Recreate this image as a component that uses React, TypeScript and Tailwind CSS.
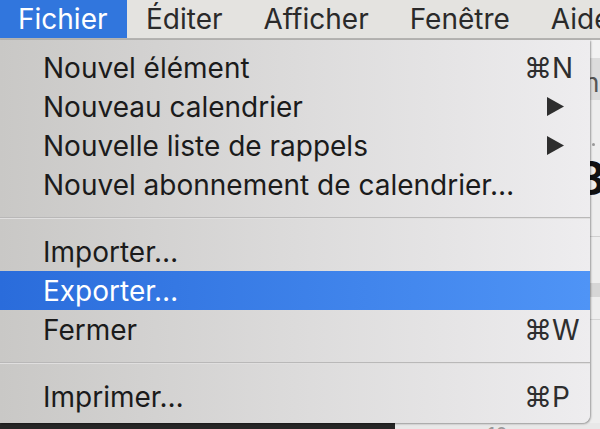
import React from 'react';

type Item =
  | { kind: 'item'; label: string; shortcut?: string; submenu?: boolean; active?: boolean }
  | { kind: 'sep' };

const items: Item[] = [
  { kind: 'item', label: 'Nouvel élément', shortcut: '⌘N' },
  { kind: 'item', label: 'Nouveau calendrier', submenu: true },
  { kind: 'item', label: 'Nouvelle liste de rappels', submenu: true },
  { kind: 'item', label: 'Nouvel abonnement de calendrier…' },
  { kind: 'sep' },
  { kind: 'item', label: 'Importer…' },
  { kind: 'item', label: 'Exporter…', active: true },
  { kind: 'item', label: 'Fermer', shortcut: '⌘W' },
  { kind: 'sep' },
  { kind: 'item', label: 'Imprimer…', shortcut: '⌘P' },
];

const menus = ['Éditer', 'Afficher', 'Fenêtre', 'Aide'];

const App: React.FC = () => {
  return (
    <div
      className="w-[600px] h-[429px] overflow-hidden flex flex-col bg-[#e9e9e9] text-[#1b1b1b]"
      style={{ fontFamily: 'Inter, "Liberation Sans", sans-serif' }}
    >
      {/* menu bar */}
      <div className="h-[38px] shrink-0 flex items-stretch bg-[#e4e3e0] text-[28px] text-[#2a2a2a] overflow-hidden">
        <div className="w-[127px] shrink-0 flex items-center pl-[18px] bg-[#3176dd] text-white">Fichier</div>
        <div className="flex items-center gap-[41px] pl-[19px]">
          {menus.map((m) => (
            <span key={m} className="whitespace-nowrap">{m}</span>
          ))}
        </div>
      </div>
      <div className="h-[2px] shrink-0 bg-[#b4b3b1]" />

      <div className="flex h-[383px] shrink-0">
        {/* dropdown */}
        <div className="w-[590px] shrink-0 rounded-br-[8px] bg-gradient-to-r from-[#c9c8c6] via-[#dcdbdb] to-[#eeedef] pt-[8px] shadow-[1px_1px_2px_rgba(0,0,0,0.35)] relative z-10">
          {items.map((it, i) =>
            it.kind === 'sep' ? (
              <div key={i} className="h-[2px] my-[13px] bg-[#b9b8b8] border-b border-[#e0dfdf]" />
            ) : (
              <div
                key={i}
                className={
                  'h-[39px] flex items-center pl-[43px] text-[28px] ' +
                  (it.active ? 'bg-gradient-to-r from-[#2a6cdb] to-[#4f94f6] text-white' : '')
                }
              >
                <span className="flex-1 whitespace-nowrap">{it.label}</span>
                {it.shortcut && <span className="w-[66px] text-[#2e2e2e] whitespace-nowrap">{it.shortcut}</span>}
                {it.submenu && (
                  <svg width="19" height="19" viewBox="0 0 19 19" className="mr-[25px]">
                    <path d="M1 0 L18 9.5 L1 19 Z" fill="#2e2e2e" />
                  </svg>
                )}
              </div>
            )
          )}
        </div>

        {/* background window peeking out */}
        <div className="w-[10px] flex flex-col bg-[#eeeeee] overflow-hidden">
          <div className="h-[18px] shrink-0 bg-[#f2f2f2]" />
          <div className="h-[42px] shrink-0 bg-[#dcdcdc] text-[26px] leading-[42px] text-[#555] ml-[-6px] pt-[4px]">h</div>
          <div className="h-[59px] shrink-0 flex items-end pl-[2px] pb-[13px]">
            <div className="w-[3px] h-[3px] rounded-full bg-[#999]" />
          </div>
          <div className="h-[38px] shrink-0 text-[46px] font-bold leading-[38px] text-[#111] ml-[-14px]">8</div>
          <div className="h-[40px] shrink-0 border-b border-[#d0d0d0]" />
          <div className="h-[46px] shrink-0" />
          <div className="h-[14px] shrink-0 bg-[#d6d6d6]" />
          <div className="h-[23px] shrink-0 border-b border-[#d4d4d4]" />
        </div>
      </div>

      {/* strip of the window below */}
      <div className="flex-1 flex">
        <div className="w-[395px] bg-[#262626]" />
        <div className="flex-1 bg-[#e8e8e8] overflow-hidden text-[20px] leading-[20px] text-[#999] pl-[92px] pt-[2px]">10</div>
      </div>
    </div>
  );
};

export default App;
